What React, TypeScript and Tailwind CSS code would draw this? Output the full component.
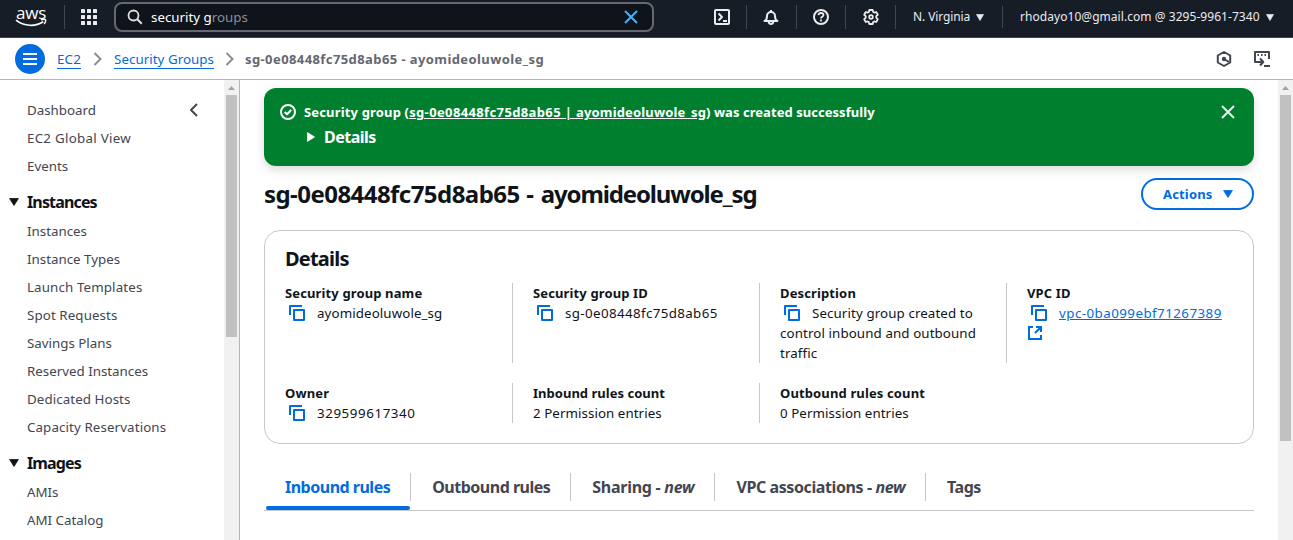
import React from "react";

type IconProps = { className?: string; children: React.ReactNode };

function Icon({ className = "", children }: IconProps) {
  return (
    <svg viewBox="0 0 16 16" width="16" height="16" fill="none" stroke="currentColor" strokeWidth="2" strokeLinejoin="round" className={`block shrink-0 ${className}`}>
      {children}
    </svg>
  );
}

function AwsLogo() {
  return (
    <div className="flex w-8 flex-col items-center text-white">
      <span className="-mt-[1px] h-[13px] font-['Open_Sans'] text-[17px] leading-[13px] font-medium tracking-[-0.2px]">aws</span>
      <svg width="32" height="8" viewBox="0 0 32 8" fill="none" stroke="currentColor" className="block">
        <path d="M1 1.200C9 7.600 20.500 7.800 28.300 2.800" strokeWidth="1.700" />
        <path d="M26 .9c2-.6 4-.6 4.500-.2s.1 2.700-1.300 4.300" strokeWidth="1.400" />
      </svg>
    </div>
  );
}

function Caret({ className = "", small }: { className?: string; small?: boolean }) {
  return (
    <svg width={small ? 8 : 10} height={small ? 7 : 8} viewBox="0 0 10 8" preserveAspectRatio="none" fill="currentColor" className={`block shrink-0 ${className}`}>
      <path d="M.6.500h8.800L5 7.500z" stroke="currentColor" strokeLinejoin="round" strokeWidth=".8" />
    </svg>
  );
}

function Chevron() {
  return (
    <svg width="10" height="16" viewBox="0 0 10 16" fill="none" stroke="#8c8c94" strokeWidth="2" className="block shrink-0">
      <path d="M1.500 2l6 6-6 6" />
    </svg>
  );
}

function CopyIcon() {
  return (
    <Icon className="text-[#006ce0]">
      <path d="M5 5h10v10H5z" />
      <path d="M1 10V1h12" />
    </Icon>
  );
}

function NavButton({ width, children }: { width: string; children: React.ReactNode }) {
  return <div className={`flex h-[24px] items-center justify-center border-r border-[#424650] ${width}`}>{children}</div>;
}

function TopBar() {
  return (
    <header className="flex h-[38px] shrink-0 items-start border-b border-[#424650] bg-[#161d26] text-[#ebebf0]">
      <div className="mt-[5px] flex h-6 w-[65px] items-center border-r border-[#424650] pl-[15px]">
        <AwsLogo />
      </div>
      <svg width="16" height="16" viewBox="0 0 16 16" fill="currentColor" className="mt-[9px] ml-4 block">
        {[0, 6, 12].map((y) => [0, 6, 12].map((x) => <rect key={`${x}-${y}`} x={x} y={y} width="4" height="4" rx=".6" />))}
      </svg>
      <div className="mt-[2px] ml-[17px] flex h-[30px] w-[540px] items-center rounded-lg border-2 border-[#656871] bg-[#0f141a] pr-[13px] pl-[10px]">
        <Icon className="ml-[1px] text-[#dedee3]">
          <circle cx="6.500" cy="6.500" r="5" strokeWidth="1.800" />
          <path d="M10.300 10.300l4.500 4.500" />
        </Icon>
        <span className="ml-2 pt-[2px] text-[13.330px] whitespace-nowrap text-white">
          security g<span className="text-[#8c8c94]">roups</span>
        </span>
        <Icon className="ml-auto text-[#42b4ff]">
          <path d="M2 2l12 12M14 2L2 14" />
        </Icon>
      </div>
      <div className="mt-[5px] ml-[43px] flex">
        <NavButton width="w-[50px]">
          <Icon>
            <rect x="1" y="1" width="14" height="14" rx="1" />
            <path d="M4.500 4.500L8 8l-3.500 3.500M9 12h4" />
          </Icon>
        </NavButton>
        <NavButton width="w-[50px] pr-[1px]">
          <Icon>
            <path d="M4 7a4 4 0 0 1 8 0c0 3 1 4.500 2.500 5h-13C3 11.500 4 10 4 7z" />
            <path d="M8 1v2M5.500 12c.2 2 1.300 3 2.500 3s2.300-1 2.500-3" />
          </Icon>
        </NavButton>
        <NavButton width="w-[49px]">
          <Icon>
            <circle cx="8" cy="8" r="7" />
            <path d="M5.500 6.200C5.700 4.700 6.700 4 8 4c1.400 0 2.500.8 2.500 2.100C10.500 8 8 7.700 8 9.500M8 10.600v1.800" strokeWidth="1.800" />
          </Icon>
        </NavButton>
        <NavButton width="w-[50px]">
          <Icon>
            <path d="M6.300 1h3.400l.5 2 1 .6 2-.6 1.600 2.800L13.300 7.200v1.600l1.500 1.400-1.600 2.800-2-.6-1 .6-.5 2H6.300l-.5-2-1-.6-2 .6-1.600-2.800 1.500-1.400V7.200L1.200 5.800 2.800 3l2 .6 1-.6z" strokeWidth="1.800" />
            <circle cx="8" cy="8" r="1.800" strokeWidth="1.800" />
          </Icon>
        </NavButton>
      </div>
      <div className="mt-[6px] flex h-[22px] w-[107px] items-center border-r border-[#424650] pl-[17px] text-[12px] whitespace-nowrap">
        <span className="tracking-[-0.1px]">N. Virginia</span>
        <Caret small className="ml-[6px]" />
      </div>
      <div className="mt-[6px] flex h-[22px] items-center pl-[17px] text-[12px] whitespace-nowrap">
        <span className="tracking-[0.05px]">rhodayo10@gmail.com @ 3295-9961-7340</span>
        <Caret small className="ml-[6px]" />
      </div>
    </header>
  );
}

function Breadcrumbs() {
  return (
    <div className="flex h-[42px] shrink-0 items-center border-b border-[#b4b4bb] bg-white pl-[15px] text-[13.330px] whitespace-nowrap">
      <div className="flex size-[30px] items-center justify-center rounded-full bg-[#006ce0] text-white">
        <Icon>
          <path d="M1 3h14M1 8h14M1 13h14" />
        </Icon>
      </div>
      <a className="ml-3 border-b border-[#006ce0] pt-[2px] leading-[17px] tracking-[0.2px] text-[#006ce0]">EC2</a>
      <span className="mr-[11px] ml-3"><Chevron /></span>
      <a className="border-b border-[#006ce0] pt-[2px] leading-[17px] tracking-[0.04px] text-[#006ce0]">Security Groups</a>
      <span className="mr-[10px] ml-[11px]"><Chevron /></span>
      <span className="pt-[2px] text-[13px] font-bold tracking-[0.41px] text-[#656871]">sg-0e08448fc75d8ab65 - ayomideoluwole_sg</span>
      <div className="mr-[23px] ml-auto flex gap-[22px] text-[#424650]">
        <Icon>
          <path d="M8 1l6.200 3.500v7L8 15l-6.200-3.500v-7z" />
          <circle cx="8" cy="8" r="1.200" fill="currentColor" />
          <path d="M8 8l5 3" />
        </Icon>
        <Icon>
          <path d="M4 11H1V1h14v7M10 15h6" />
          <path d="M3.500 4h1.500M7 4h1.500M10.500 4H12" />
          <path d="M3 11h6M6 7.500L9.300 11 6 14.500" />
        </Icon>
      </div>
    </div>
  );
}

function Scrollbar({ thumb }: { thumb: string }) {
  return (
    <div className="flex w-[15px] shrink-0 flex-col items-center bg-[#f1f1f1]">
      <div className="flex h-[15px] items-center justify-center">
        <svg width="7" height="4" viewBox="0 0 7 4" fill="#a3a3a3" className="block"><path d="M0 4L3.500 0 7 4z" /></svg>
      </div>
      <div className={`w-[11px] bg-[#c1c1c1] ${thumb}`} />
    </div>
  );
}

const itemTracking: Record<string, string> = {
  "EC2 Global View": "tracking-[0.27px]",
  "Launch Templates": "tracking-[0.13px]",
  "Spot Requests": "tracking-[0.1px]",
  "Capacity Reservations": "tracking-[0.11px]",
  "Dedicated Hosts": "tracking-[0.08px]",
};

function SideGroup({ title, items }: { title?: string; items: string[] }) {
  return (
    <div>
      {title && (
        <div className="mt-[7px] mb-[2px] flex h-7 items-center pl-[9px] text-[16px] font-bold text-[#0f141a]">
          <Caret />
          <span className="ml-2 tracking-[-0.85px]">{title}</span>
        </div>
      )}
      <ul>
        {items.map((item) => (
          <li key={item} className={`flex h-7 items-center pl-[27px] text-[13.330px] whitespace-nowrap text-[#424650] ${itemTracking[item] ?? ""}`}>{item}</li>
        ))}
      </ul>
    </div>
  );
}

function Sidebar() {
  return (
    <aside className="flex w-[240px] shrink-0 border-r border-[#b4b4bb]">
      <nav className="relative flex-1 overflow-hidden pt-[17px]">
        <Icon className="absolute top-[22px] left-[186px] text-[#424650]">
          <path d="M11 2L5 8l6 6" />
        </Icon>
        <SideGroup items={["Dashboard", "EC2 Global View", "Events"]} />
        <SideGroup
          title="Instances"
          items={["Instances", "Instance Types", "Launch Templates", "Spot Requests", "Savings Plans", "Reserved Instances", "Dedicated Hosts", "Capacity Reservations"]}
        />
        <SideGroup title="Images" items={["AMIs", "AMI Catalog"]} />
      </nav>
      <Scrollbar thumb="h-[242px]" />
    </aside>
  );
}

function Field({ label, first, tracking = "tracking-[0.13px]", children }: { label: string; first?: boolean; tracking?: string; children: React.ReactNode }) {
  return (
    <div className={first ? "" : "border-l border-[#c6c6cd] pl-5"}>
      <div className={`text-[13px] leading-5 font-bold ${tracking}`}>{label}</div>
      <div className="leading-5 tracking-[0.06px]">{children}</div>
    </div>
  );
}

function Copyable({ tracking = "tracking-[0.1px]", children }: { tracking?: string; children: React.ReactNode }) {
  return (
    <>
      <span className="mt-[-2px] mr-3 ml-1 inline-block align-middle"><CopyIcon /></span>
      <span className={tracking}>{children}</span>
    </>
  );
}

function Tab({ active, last, tracking = "", children }: { active?: boolean; last?: boolean; tracking?: string; children: React.ReactNode }) {
  return (
    <div className={`flex flex-col ${active ? "text-[#006ce0]" : "text-[#424650]"}`}>
      <div className={`flex h-7 items-center pr-5 pl-[21px] ${last ? "" : "border-r border-[#c6c6cd]"}`}>
        <span className={`whitespace-pre ${tracking}`}>{children}</span>
      </div>
      {active && <div className="mt-[5px] mr-[1px] ml-[2px] h-1 rounded-[2px] bg-[#006ce0]" />}
    </div>
  );
}

function Main() {
  return (
    <main className="flex-1 overflow-hidden pt-2 pr-6 pl-6 text-[13.330px] text-[#0f141a]">
      <section className="flex h-[78px] rounded-xl bg-[#00802f] pl-4 text-white shadow-[0_4px_10px_rgba(0,7,22,0.14)]">
        <Icon className="mt-4">
          <circle cx="8" cy="8" r="7" />
          <path d="M4.700 8l2.300 2.300L11.200 6" />
        </Icon>
        <div className="ml-2 flex-1 pt-[14px] font-bold">
          <div className="text-[13px] leading-5 tracking-[0.16px] whitespace-nowrap">
            Security group (
            <a className="underline">
              <span className="tracking-[0.37px]">sg-0e08448fc75d8ab65 | </span>ayomideoluwole_sg
            </a>
            <span className="tracking-[0.05px]">) was created successfully</span>
          </div>
          <div className="mt-1 flex h-[22px] items-center text-[16px]">
            <Caret className="ml-[2px] -rotate-90" />
            <span className="ml-2 tracking-[-0.5px]">Details</span>
          </div>
        </div>
        <Icon className="mt-4 mr-[18px] text-[#ebebf0]">
          <path d="M2 2l12 12M14 2L2 14" />
        </Icon>
      </section>
      <div className="mt-3 flex h-8 items-center justify-between">
        <h1 className="text-[24px] leading-[30px] font-bold whitespace-pre">
          <span className="tracking-[-0.55px]">sg-0e08448fc75d8ab65</span>
          <span className="tracking-[0.3px]"> - </span>
          <span className="tracking-[-1.13px]">ayomideoluwole_sg</span>
        </h1>
        <button className="flex h-8 w-[113px] items-center rounded-full border-2 border-[#006ce0] pl-5 text-[13px] font-bold text-[#006ce0]">
          <span className="pt-[1px] tracking-[0.17px]">Actions</span>
          <Caret className="ml-[10px]" />
        </button>
      </div>
      <section className="mt-5 h-[214px] rounded-2xl border border-[#c6c6cd] px-5 pt-4">
        <h2 className="text-[20px] leading-6 font-bold tracking-[-0.8px]">Details</h2>
        <div className="mt-3 grid grid-cols-[227px_247px_247px_1fr] gap-y-5">
          <Field label="Security group name" first><Copyable>ayomideoluwole_sg</Copyable></Field>
          <Field label="Security group ID"><Copyable tracking="tracking-[0.38px]">sg-0e08448fc75d8ab65</Copyable></Field>
          <Field label="Description"><Copyable>Security group created to<br />control inbound and outbound<br />traffic</Copyable></Field>
          <Field label="VPC ID">
            <Copyable tracking="tracking-[0.46px]"><a className="whitespace-nowrap text-[#006ce0] underline">vpc-0ba099ebf71267389</a></Copyable>
            <Icon className="mt-[2px] text-[#006ce0]">
              <path d="M6 2H2v12h12v-4M9 2h5v5M14 2L8 8" strokeLinejoin="miter" />
            </Icon>
          </Field>
          <Field label="Owner" first><Copyable tracking="tracking-[0.58px]">329599617340</Copyable></Field>
          <Field label="Inbound rules count" tracking="tracking-[0.02px]">2 Permission entries</Field>
          <Field label="Outbound rules count">0 Permission entries</Field>
        </div>
      </section>
      <div className="mt-[29px] flex h-[38px] border-b border-[#c6c6cd] text-[16px] font-bold tracking-[-0.5px]">
        <Tab active>Inbound rules</Tab>
        <Tab>Outbound rules</Tab>
        <Tab tracking="tracking-[-0.27px]">Sharing - <em>new</em></Tab>
        <Tab tracking="tracking-[-0.4px]">VPC associations - <em>new</em></Tab>
        <Tab last>Tags</Tab>
      </div>
    </main>
  );
}

export default function App() {
  return (
    <div className="flex h-[540px] w-[1293px] flex-col overflow-hidden bg-white font-['Noto_Sans',sans-serif]">
      <TopBar />
      <Breadcrumbs />
      <div className="flex min-h-0 flex-1">
        <Sidebar />
        <Main />
        <Scrollbar thumb="h-[346px]" />
      </div>
    </div>
  );
}
